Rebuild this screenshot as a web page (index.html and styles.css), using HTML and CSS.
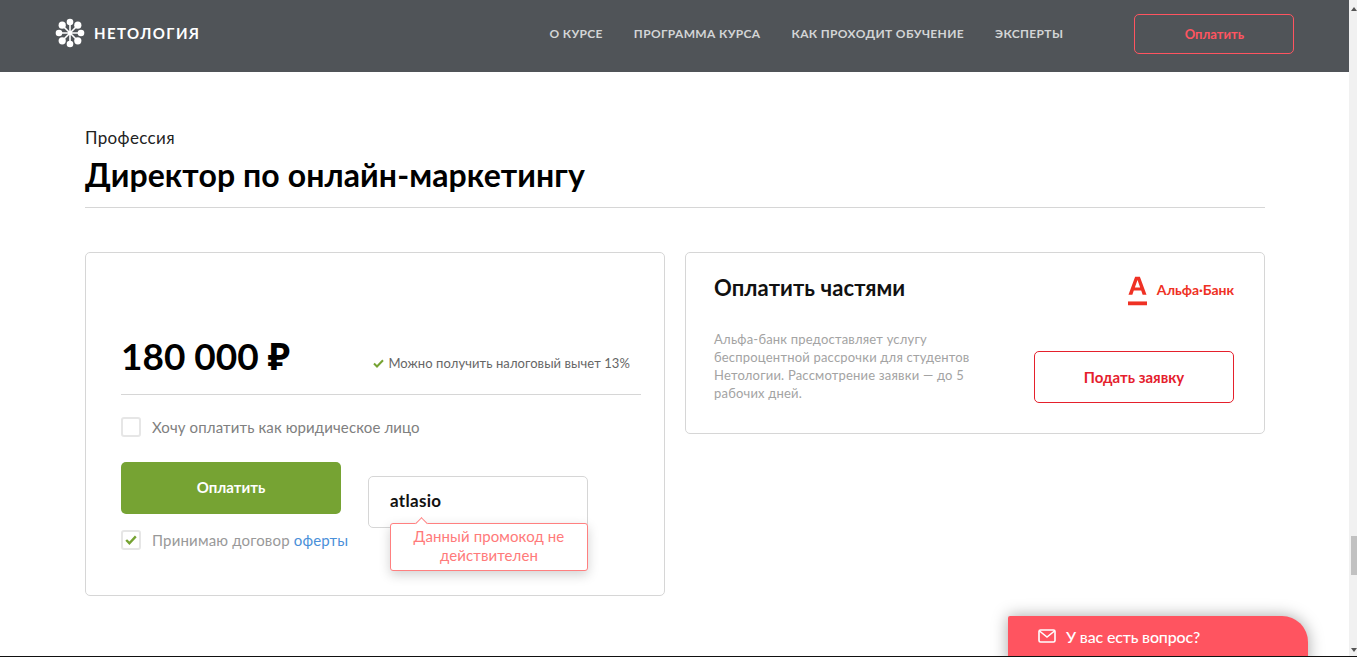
FILE: index.html
```html
<!DOCTYPE html>
<html lang="ru">
<head>
<meta charset="utf-8">
<title>Нетология</title>
<link rel="stylesheet" href="styles.css">
</head>
<body>
<div class="window">
  <div class="page">
    <header class="topbar">
      <a class="logo">
        <svg class="logo-mark" width="30" height="30" viewBox="0 0 30 30">
          <g stroke="#fff" stroke-width="1.6">
            <path d="M15 4V26M4 15H26M7.2 7.2L22.8 22.8M22.8 7.2L7.2 22.8"/>
          </g>
          <g fill="#fff">
            <circle cx="15" cy="4" r="3.3"/><circle cx="15" cy="26" r="3.3"/>
            <circle cx="4" cy="15" r="3.3"/><circle cx="26" cy="15" r="3.3"/>
            <circle cx="7.2" cy="7.2" r="3.6"/><circle cx="22.8" cy="7.2" r="3.6"/>
            <circle cx="7.2" cy="22.8" r="3.6"/><circle cx="22.8" cy="22.8" r="3.6"/>
          </g>
        </svg>
        <span class="logo-text">НЕТОЛОГИЯ</span>
      </a>
      <nav class="nav">
        <a>О КУРСЕ</a>
        <a>ПРОГРАММА КУРСА</a>
        <a>КАК ПРОХОДИТ ОБУЧЕНИЕ</a>
        <a>ЭКСПЕРТЫ</a>
      </nav>
      <button class="btn-outline-top">Оплатить</button>
    </header>
    <main class="content">
      <p class="kicker">Профессия</p>
      <h1 class="title">Директор по онлайн-маркетингу</h1>
      <div class="cards">
        <section class="card card-pay">
          <div class="price-row">
            <span class="price">180 000 ₽</span>
            <span class="tax">
              <svg width="11" height="9" viewBox="0 0 11 9"><path d="M1 4.5L4 7.5L10 1.2" fill="none" stroke="#76a333" stroke-width="2"/></svg>
              Можно получить налоговый вычет 13%
            </span>
          </div>
          <label class="legal"><span class="box"></span>Хочу оплатить как юридическое лицо</label>
          <div class="actions">
            <div class="action-left">
              <button class="btn-green">Оплатить</button>
              <label class="accept">
                <span class="box box-small">
                  <svg width="12" height="10" viewBox="0 0 12 10"><path d="M1.2 5L4.4 8.2L10.8 1.4" fill="none" stroke="#76a333" stroke-width="2.4"/></svg>
                </span>
                Принимаю договор&nbsp;<a class="link">оферты</a>
              </label>
            </div>
            <div class="promo">
              <div class="promo-input">atlasio</div>
              <div class="tooltip">Данный промокод не действителен</div>
            </div>
          </div>
        </section>
        <section class="card card-credit">
          <div class="credit-head">
            <h2 class="credit-title">Оплатить частями</h2>
            <div class="alfa">
              <svg width="19" height="30" viewBox="0 0 20 30">
                <path fill-rule="evenodd" d="M7.5 0H12.5L19.5 19H15.4L13.9 14.6H6.1L4.6 19H0.5ZM7.2 11.4H12.8L10 3.4Z" fill="#ef3124"/>
                <rect y="26" width="20" height="4" fill="#ef3124"/>
              </svg>
              <span class="alfa-name">Альфа·Банк</span>
            </div>
          </div>
          <div class="credit-body">
            <p class="credit-text">Альфа-банк предоставляет услугу беспроцентной рассрочки для студентов Нетологии. Рассмотрение заявки — до 5 рабочих дней.</p>
            <button class="btn-apply">Подать заявку</button>
          </div>
        </section>
      </div>
    </main>
    <div class="chat">
      <svg width="18" height="14" viewBox="0 0 18 14"><rect x="1" y="1" width="16" height="12" rx="1.5" fill="none" stroke="#fff" stroke-width="1.6"/><path d="M1.5 2L9 8L16.5 2" fill="none" stroke="#fff" stroke-width="1.6"/></svg>
      <span>У вас есть вопрос?</span>
    </div>
  </div>
  <div class="scrollbar">
    <span class="arrow arrow-up"></span>
    <span class="thumb"></span>
    <span class="arrow arrow-down"></span>
  </div>
</div>
</body>
</html>
```
FILE: styles.css
```css
* { box-sizing: border-box; }
html, body { margin: 0; height: 100%; overflow: hidden; }
body {
  font-family: "Lato", "Noto Sans", sans-serif;
  background: #fff;
  color: #000;
}
.window {
  display: flex;
  height: 657px;
  border-bottom: 1px solid #111;
}
.page {
  position: relative;
  flex: 1;
  min-width: 0;
  overflow: hidden;
}
.topbar {
  display: flex;
  align-items: center;
  height: 72px;
  padding: 0 55px 5px;
  background: #505458;
}
.logo { display: flex; align-items: center; gap: 9px; flex: none; margin-top: -1px; }
.logo-text {
  color: #fff;
  font-size: 15px;
  font-weight: 700;
  letter-spacing: 1.4px;
  white-space: nowrap;
}
.nav {
  display: flex;
  flex: none;
  gap: 31px;
  margin-left: 349px;
}
.nav a {
  color: #d3d5d6;
  font-size: 12px;
  font-weight: 700;
  letter-spacing: 0.35px;
  white-space: nowrap;
}
.btn-outline-top {
  flex: none;
  width: 160px;
  height: 40px;
  margin-left: 71px;
  background: transparent;
  border: 1px solid #ff5460;
  border-radius: 5px;
  color: #ff5460;
  font: 700 13px "Lato", "Noto Sans", sans-serif;
}
.content { padding: 56px 84px 0 85px; }
.kicker { margin: 0; font-size: 17px; letter-spacing: 0.35px; line-height: 20px; color: #222; }
.title {
  margin: 6px 0 0;
  padding-bottom: 11px;
  border-bottom: 1px solid #d6d6d6;
  font-size: 32px;
  letter-spacing: 0.1px;
  line-height: 42px;
  font-weight: 700;
}
.cards { display: flex; gap: 20px; align-items: flex-start; margin-top: 44px; }
.card {
  width: 580px;
  border: 1px solid #d6d6d6;
  border-radius: 5px;
}
.card-pay { height: 344px; padding: 78px 23px 0 35px; }
.price-row {
  display: flex;
  justify-content: space-between;
  align-items: flex-end;
  height: 64px;
  padding: 0 11px 16px 0;
  border-bottom: 1px solid #d6d6d6;
}
.price { font-size: 37px; line-height: 44px; font-weight: 700; }
.tax { display: flex; align-items: center; gap: 4px; margin-bottom: 6px; font-size: 13px; letter-spacing: 0.08px; line-height: 18px; color: #666; }
.legal {
  display: flex;
  align-items: center;
  gap: 11px;
  margin-top: 22px;
  font-size: 15px;
  letter-spacing: 0.12px;
  line-height: 20px;
  color: #808080;
}
.box {
  display: flex;
  flex: none;
  align-items: center;
  justify-content: center;
  width: 20px;
  height: 20px;
  border: 2px solid #e6e6e6;
  border-radius: 3px;
}
.actions { display: flex; gap: 27px; margin-top: 25px; }
.action-left { width: 220px; }
.btn-green {
  display: block;
  width: 220px;
  height: 52px;
  padding-bottom: 4px;
  background: #76a333;
  border: 0;
  border-radius: 5px;
  color: #fff;
  font: 700 15px "Lato", "Noto Sans", sans-serif;
}
.accept {
  display: flex;
  align-items: center;
  margin-top: 16px;
  white-space: nowrap;
  font-size: 15px;
  letter-spacing: 0.17px;
  line-height: 20px;
  color: #999;
}
.box-small { margin-right: 11px; }
.link { color: #4a90d9; }
.promo { position: relative; width: 220px; margin-top: 14px; }
.promo-input {
  height: 52px;
  padding: 0 21px;
  border: 1px solid #d6d6d6;
  border-radius: 5px;
  font-size: 17px;
  letter-spacing: 0.3px;
  font-weight: 700;
  line-height: 48px;
  color: #111;
}
.tooltip {
  position: absolute;
  left: 22px;
  top: 47px;
  width: 198px;
  padding: 3px 10px 5px;
  background: #fff;
  border: 1px solid #ff8080;
  border-radius: 3px;
  box-shadow: 0 4px 12px rgba(0, 0, 0, 0.18);
  color: #ff7a7a;
  font-size: 15px;
  letter-spacing: 0.1px;
  line-height: 19px;
  text-align: center;
}
.tooltip::before {
  content: "";
  position: absolute;
  left: 26px;
  top: -5px;
  width: 8px;
  height: 8px;
  background: #fff;
  border-left: 1px solid #ff8080;
  border-top: 1px solid #ff8080;
  transform: rotate(45deg);
}
.card-credit { height: 182px; padding: 18px 30px 0 28px; }
.credit-head { display: flex; justify-content: space-between; align-items: flex-start; }
.credit-title { margin: 0; font-size: 22px; letter-spacing: 0.1px; line-height: 34px; font-weight: 700; color: #111; }
.alfa { display: flex; align-items: center; gap: 10px; margin-top: 5px; }
.alfa-name { margin-bottom: 3px; color: #ef3124; font-size: 14px; font-weight: 700; letter-spacing: -0.05px; }
.credit-body { display: flex; justify-content: space-between; align-items: flex-start; margin-top: 24px; }
.credit-text { width: 265px; margin: 0; font-size: 13px; letter-spacing: 0.2px; line-height: 18px; color: #a3a3a3; }
.btn-apply {
  flex: none;
  width: 200px;
  height: 52px;
  margin-top: 21px;
  padding-bottom: 2px;
  background: #fff;
  border: 1px solid #e5202c;
  border-radius: 5px;
  color: #e5202c;
  font: 700 15px "Lato", "Noto Sans", sans-serif;
}
.chat {
  position: absolute;
  left: 1008px;
  top: 616px;
  display: flex;
  align-items: center;
  gap: 10px;
  width: 300px;
  height: 50px;
  padding: 0 30px 10px;
  background: #ff5460;
  border-radius: 2px 26px 0 0;
  box-shadow: 0 0 16px rgba(0, 0, 0, 0.35);
  color: #fff;
  font-size: 16px;
  letter-spacing: -0.15px;
  font-weight: 500;
}
.scrollbar {
  position: relative;
  flex: 0 0 8px;
  background: #f1f1f1;
}
.thumb {
  position: absolute;
  top: 536px;
  left: 2px;
  right: 0;
  height: 39px;
  background: #c1c1c1;
}
.arrow {
  position: absolute;
  right: 0;
  width: 0;
  height: 0;
  border-left: 3px solid transparent;
  border-right: 3px solid transparent;
}
.arrow-up { top: 7px; border-bottom: 4px solid #555; }
.arrow-down { bottom: 4px; border-top: 4px solid #555; }
```
